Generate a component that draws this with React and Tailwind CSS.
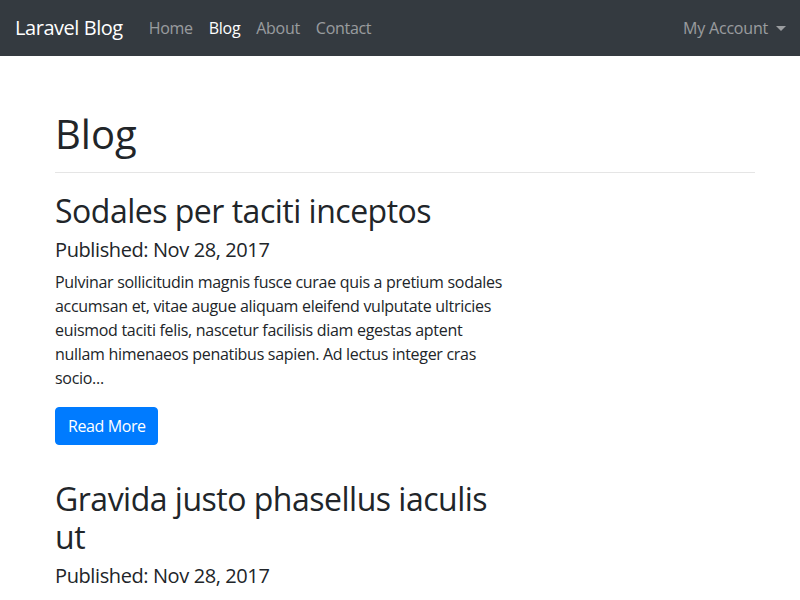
import { useState } from 'react';

const posts = [
    {
        title: 'Sodales per taciti inceptos',
        date: 'Nov 28, 2017',
        excerpt:
            'Pulvinar sollicitudin magnis fusce curae quis a pretium sodales accumsan et, vitae augue aliquam eleifend vulputate ultricies euismod taciti felis, nascetur facilisis diam egestas aptent nullam himenaeos penatibus sapien. Ad lectus integer cras socio...',
    },
    {
        title: 'Gravida justo phasellus iaculis ut',
        date: 'Nov 28, 2017',
        excerpt:
            'Lorem ipsum dolor sit amet consectetur adipiscing elit, sed do eiusmod tempor incididunt ut labore et dolore magna aliqua...',
    },
];

export default function App() {
    const [active] = useState('Blog');
    const links = ['Home', 'Blog', 'About', 'Contact'];

    return (
        <div className="min-h-screen bg-white text-[#212529] font-['Open_Sans',sans-serif]">
            {/* Navbar */}
            <nav className="h-14 bg-[#343a40] pl-[15px] pr-[14px] flex items-center">
                <a className="text-[20px] text-white mr-[18px] leading-[30px] tracking-[-0.45px]">Laravel Blog</a>
                <ul className="flex items-center">
                    {links.map((l) => (
                        <li key={l}>
                            <a className={`px-2 text-[16px] tracking-[-0.3px] ${l === active ? 'text-white' : 'text-white/50'}`}>{l}</a>
                        </li>
                    ))}
                </ul>
                <div className="ml-auto flex items-center text-white/50 text-[16px] tracking-[-0.2px]">
                    My Account
                    <span className="ml-[8px] w-0 h-0 border-x-[5px] border-x-transparent border-t-[5px] border-t-white/50"></span>
                </div>
            </nav>

            {/* Content */}
            <div className="px-[55px] pt-[54px]">
                <h1 className="text-[40px] leading-[48px] mb-[14px]">Blog</h1>
                <hr className="border-t border-black/10 mb-[19px] -mr-[10px]" />
                <div className="w-[457px]">
                    {posts.map((p, i) => (
                        <div key={i} className="mb-[35px]">
                            <h2 className="text-[32px] leading-[38px] mb-2 tracking-[-0.5px]">{p.title}</h2>
                            <h5 className="text-[20px] leading-[24px] mb-2 tracking-[-0.4px]">Published: {p.date}</h5>
                            <p className="text-[16px] leading-[24px] mb-[17px] tracking-[-0.3px]">{p.excerpt}</p>
                            <button className="bg-[#007bff] border border-[#007bff] text-white text-[16px] leading-[24px] pl-3 pr-[11px] py-[6px] rounded tracking-[-0.4px]">
                                Read More
                            </button>
                        </div>
                    ))}
                </div>
            </div>
        </div>
    );
}
